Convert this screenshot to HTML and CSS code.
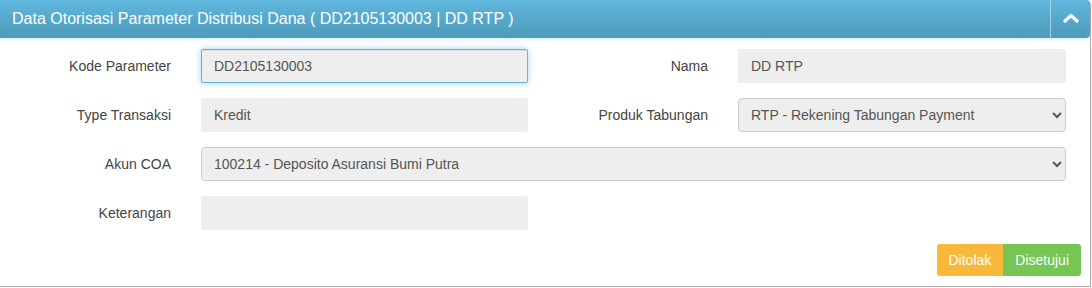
FILE: index.html
```html
<!DOCTYPE html>
<html lang="en">

<head>
    <meta charset="UTF-8">
    <meta name="viewport" content="width=device-width, initial-scale=1.0">
    <title>Otorisasi Parameter</title>
    <link rel="stylesheet" href="styles.css">
</head>

<body>
    <div class="panel">
        <div class="panelHeading">
            <span class="panelTitle">Data Otorisasi Parameter Distribusi Dana ( DD2105130003 | DD RTP )</span>
            <button class="collapseBtn" aria-label="collapse">
                <svg width="16" height="10" viewBox="0 0 16 10">
                    <path d="M2 8 L8 2.5 L14 8" fill="none" stroke="#fff" stroke-width="3.2" stroke-linecap="round" stroke-linejoin="round"/>
                </svg>
            </button>
        </div>
        <div class="panelBody">
            <div class="formGrid">
                <label for="kode">Kode Parameter</label>
                <input type="text" id="kode" class="field focused" value="DD2105130003" readonly>
                <label for="nama">Nama</label>
                <input type="text" id="nama" class="field" value="DD RTP" readonly>

                <label for="type">Type Transaksi</label>
                <input type="text" id="type" class="field" value="Kredit" readonly>
                <label for="produk">Produk Tabungan</label>
                <select id="produk" class="field select" disabled>
                    <option>RTP - Rekening Tabungan Payment</option>
                </select>

                <label for="coa">Akun COA</label>
                <select id="coa" class="field select wide" disabled>
                    <option>100214 - Deposito Asuransi Bumi Putra</option>
                </select>

                <label for="ket">Keterangan</label>
                <input type="text" id="ket" class="field" value="" readonly>
            </div>
            <div class="actions">
                <button id="ditolak">Ditolak</button>
                <button id="disetujui">Disetujui</button>
            </div>
        </div>
    </div>
</body>

</html>
```

FILE: styles.css
```css
* {
    box-sizing: border-box;
}

body {
    margin: 0;
    font-family: "Liberation Sans", Arial, sans-serif;
    font-size: 14px;
    color: #444;
    background: #fff;
}

.panel {
    width: 1091px;
    height: 287px;
    border-right: 1px solid #a9a9a9;
    border-bottom: 1px solid #a9a9a9;
    border-top-right-radius: 5px;
    display: flex;
    flex-direction: column;
}

.panelHeading {
    height: 38px;
    display: flex;
    align-items: stretch;
    justify-content: space-between;
    background: linear-gradient(to bottom, #5fb7dd, #4e9aba);
    border-top-right-radius: 4px;
    border-bottom-right-radius: 4px;
    box-shadow: 0 2px 3px rgba(120, 190, 220, 0.25);
}

.panelTitle {
    color: #fff;
    font-size: 16px;
    padding-left: 12px;
    line-height: 38px;
}

.collapseBtn {
    width: 40px;
    border: none;
    border-left: 1px solid #9fd3ea;
    background: transparent;
    display: flex;
    align-items: center;
    justify-content: center;
    padding: 0 0 2px 0;
}

.panelBody {
    flex: 1;
    display: flex;
    flex-direction: column;
    padding: 11px 9px 10px 0;
}

.formGrid {
    display: grid;
    grid-template-columns: 171px 327px 150px 328px;
    column-gap: 30px;
    row-gap: 15px;
    align-items: center;
}

.formGrid label {
    text-align: right;
    color: #444;
}

.field {
    height: 34px;
    width: 100%;
    padding: 6px 12px;
    font-family: inherit;
    font-size: 14px;
    color: #555;
    background-color: #eee;
    border: 1px solid #eee;
    border-radius: 2px;
    outline: none;
}

.field.focused {
    border-color: #66afe9;
    box-shadow: inset 0 1px 1px rgba(0, 0, 0, .075), 0 0 6px rgba(102, 175, 233, .6);
}

.select {
    border: 1px solid #ccc;
    border-radius: 4px;
    padding: 6px 8px;
    opacity: 1;
}

.select.wide {
    grid-column: 2 / 5;
}

.actions {
    margin-top: auto;
    display: flex;
    justify-content: flex-end;
}

.actions button {
    height: 32px;
    padding: 0 12px;
    border: none;
    color: #fff;
    font-family: inherit;
    font-size: 14px;
    cursor: pointer;
}

#ditolak {
    background-color: #f8b93b;
    border-radius: 3px 0 0 3px;
}

#disetujui {
    background-color: #76c653;
    border-radius: 0 3px 3px 0;
}
```
